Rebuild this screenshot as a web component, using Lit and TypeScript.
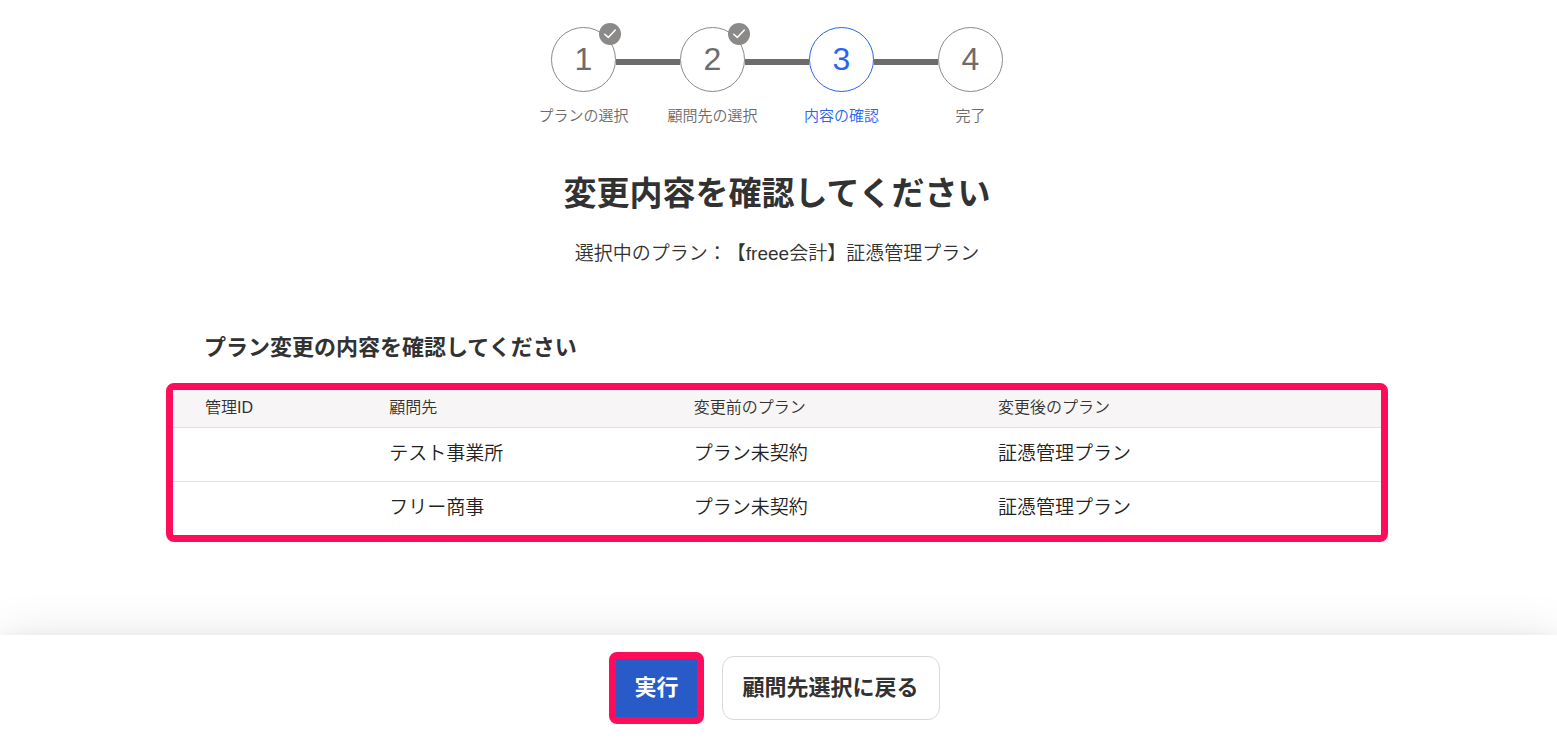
import { LitElement, html, css, nothing } from "lit";
import { customElement, property } from "lit/decorators.js";
import { classMap } from "lit/directives/class-map.js";

type StepState = "done" | "current" | "upcoming";

interface Step {
  label: string;
  state: StepState;
}

interface PlanChange {
  managementId: string;
  client: string;
  before: string;
  after: string;
}

const STEPS: Step[] = [
  { label: "プランの選択", state: "done" },
  { label: "顧問先の選択", state: "done" },
  { label: "内容の確認", state: "current" },
  { label: "完了", state: "upcoming" },
];

const CHANGES: PlanChange[] = [
  { managementId: "", client: "テスト事業所", before: "プラン未契約", after: "証憑管理プラン" },
  { managementId: "", client: "フリー商事", before: "プラン未契約", after: "証憑管理プラン" },
];

@customElement("step-progress")
export class StepProgress extends LitElement {
  @property({ attribute: false }) steps: Step[] = [];

  static styles = css`
    :host {
      display: block;
    }
    .steps {
      display: flex;
      justify-content: center;
      margin: 0;
      padding: 0;
      list-style: none;
    }
    .step {
      display: flex;
      flex-direction: column;
      flex: 0 1 129px;
      color: #6e6c6b;
    }
    .current {
      color: #2864f0;
    }
    .track {
      display: flex;
      align-items: center;
    }
    .line {
      flex: 1;
      height: 6px;
      margin-top: 5px;
      background: #6e6c6b;
    }
    .step:first-child .before,
    .step:last-child .after {
      visibility: hidden;
    }
    .circle {
      position: relative;
      display: grid;
      place-items: center;
      box-sizing: border-box;
      width: 65px;
      height: 65px;
      padding-bottom: 2px;
      border: 1px solid #8c8989;
      border-radius: 50%;
      font-size: 32px;
      line-height: 40px;
    }
    .current .circle {
      border-color: #2864f0;
    }
    .badge {
      position: absolute;
      top: -5px;
      right: -6px;
      width: 22px;
      height: 22px;
    }
    .label {
      margin-top: 12px;
      font-size: 15px;
      line-height: 24px;
      text-align: center;
    }
  `;

  render() {
    return html`
      <ol class="steps">
        ${this.steps.map(
          (step, i) => html`
            <li
              class=${classMap({ step: true, current: step.state === "current" })}
              aria-current=${step.state === "current" ? "step" : nothing}
            >
              <div class="track">
                <span class="line before"></span>
                <span class="circle">
                  ${i + 1}
                  ${step.state === "done"
                    ? html`<svg class="badge" viewBox="0 0 22 22" aria-hidden="true">
                        <circle cx="11" cy="11" r="11" fill="#8c8989" />
                        <path
                          d="M5.7 11.2 9.3 14.4 16.3 7"
                          fill="none"
                          stroke="#fff"
                          stroke-width="1.5"
                          stroke-linecap="round"
                          stroke-linejoin="round"
                        />
                      </svg>`
                    : nothing}
                </span>
                <span class="line after"></span>
              </div>
              <span class="label">${step.label}</span>
            </li>
          `
        )}
      </ol>
    `;
  }
}

@customElement("app-root")
export class AppRoot extends LitElement {
  static styles = css`
    :host {
      display: flex;
      flex-direction: column;
      min-height: 100vh;
      background: #fff;
      color: #323232;
      font-family: "Liberation Sans", "Noto Sans CJK JP", sans-serif;
      font-weight: 350;
      text-spacing-trim: space-all;
    }
    .content {
      flex: 1;
      box-sizing: border-box;
      width: 100%;
      max-width: 1225px;
      margin: 0 auto;
      padding: 27px 3px 48px 0;
    }
    .title {
      margin: 42px 0 0;
      font-size: 33px;
      line-height: 48px;
      text-align: center;
    }
    .plan {
      margin: 22px 0 0;
      font-size: 19px;
      line-height: 28px;
      text-align: center;
    }
    .subtitle {
      margin: 64px 0 0;
      padding: 0 38px;
      font-size: 22px;
      line-height: 32px;
    }
    .frame {
      margin-top: 19px;
      border: 7px solid #ff0d5a;
      border-radius: 8px;
    }
    .table {
      width: 100%;
      border-collapse: collapse;
      table-layout: fixed;
      text-align: left;
    }
    .id {
      width: 17.9%;
    }
    .wide {
      width: 25.2%;
    }
    .th,
    .td {
      padding: 0 0 2px;
      vertical-align: middle;
    }
    .th:first-child,
    .td:first-child {
      padding-left: 32px;
    }
    .th {
      height: 35px;
      border-bottom: 1px solid #e1dfdf;
      background: #f7f5f5;
      font-size: 16px;
      font-weight: 350;
      line-height: 24px;
    }
    .td {
      height: 51px;
      border-bottom: 1px solid #e4e2e2;
      color: #222;
      font-size: 19px;
      line-height: 28px;
    }
    .row:last-child .td {
      border-bottom: 0;
    }
    .footer {
      position: sticky;
      bottom: 0;
      display: flex;
      align-items: center;
      justify-content: center;
      gap: 18px;
      padding: 17px 8px 15px 0;
      background: #fff;
      box-shadow: 0 0 12px rgba(0, 0, 0, 0.04), 0 0 48px rgba(0, 0, 0, 0.1);
    }
    .button {
      box-sizing: border-box;
      height: 64px;
      padding: 0 20px;
      border: 1px solid #d9d9d9;
      border-radius: 12px;
      background: #fff;
      color: #323232;
      font: inherit;
      font-size: 22px;
      font-weight: 700;
      line-height: 32px;
      cursor: pointer;
    }
    .primary {
      height: 72px;
      padding: 0 18px;
      border: 7px solid #ff0d5a;
      border-radius: 8px;
      background: #285ac8;
      color: #fff;
    }
  `;

  render() {
    return html`
      <main class="content">
        <step-progress .steps=${STEPS}></step-progress>
        <h1 class="title">変更内容を確認してください</h1>
        <p class="plan">選択中のプラン：【freee会計】証憑管理プラン</p>
        <h2 class="subtitle" id="changes">プラン変更の内容を確認してください</h2>
        <div class="frame">
          <table class="table" aria-labelledby="changes">
            <colgroup>
              <col class="id" />
              <col class="wide" />
              <col class="wide" />
              <col />
            </colgroup>
            <thead>
              <tr>
                <th class="th" scope="col">管理ID</th>
                <th class="th" scope="col">顧問先</th>
                <th class="th" scope="col">変更前のプラン</th>
                <th class="th" scope="col">変更後のプラン</th>
              </tr>
            </thead>
            <tbody>
              ${CHANGES.map(
                (c) => html`
                  <tr class="row">
                    <td class="td">${c.managementId}</td>
                    <td class="td">${c.client}</td>
                    <td class="td">${c.before}</td>
                    <td class="td">${c.after}</td>
                  </tr>
                `
              )}
            </tbody>
          </table>
        </div>
      </main>
      <footer class="footer">
        <button class="button primary" type="button">実行</button>
        <button class="button" type="button">顧問先選択に戻る</button>
      </footer>
    `;
  }
}
